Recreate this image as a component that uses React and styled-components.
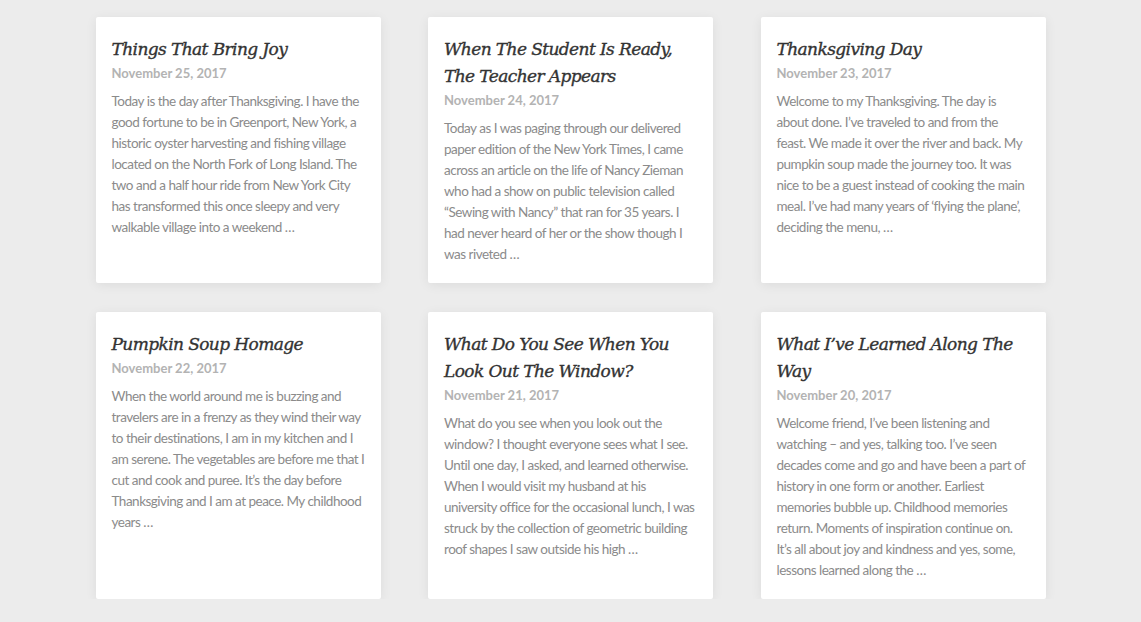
import React from "react";
import styled, { createGlobalStyle } from "styled-components";

const posts = [
  {
    title: "Things That Bring Joy",
    date: "November 25, 2017",
    excerpt:
      "Today is the day after Thanksgiving. I have the good fortune to be in Greenport, New York, a historic oyster harvesting and fishing village located on the North Fork of Long Island. The two and a half hour ride from New York City has transformed this once sleepy and very walkable village into a weekend …",
  },
  {
    title: "When The Student Is Ready, The Teacher Appears",
    date: "November 24, 2017",
    excerpt:
      "Today as I was paging through our delivered paper edition of the New York Times, I came across an article on the life of Nancy Zieman who had a show on public television called “Sewing with Nancy” that ran for 35 years. I had never heard of her or the show though I was riveted …",
  },
  {
    title: "Thanksgiving Day",
    date: "November 23, 2017",
    excerpt:
      "Welcome to my Thanksgiving. The day is about done. I’ve traveled to and from the feast. We made it over the river and back. My pumpkin soup made the journey too. It was nice to be a guest instead of cooking the main meal. I’ve had many years of ‘flying the plane’, deciding the menu, …",
  },
  {
    title: "Pumpkin Soup Homage",
    date: "November 22, 2017",
    excerpt:
      "When the world around me is buzzing and travelers are in a frenzy as they wind their way to their destinations, I am in my kitchen and I am serene. The vegetables are before me that I cut and cook and puree. It’s the day before Thanksgiving and I am at peace. My childhood years …",
  },
  {
    title: "What Do You See When You Look Out The Window?",
    date: "November 21, 2017",
    excerpt:
      "What do you see when you look out the window? I thought everyone sees what I see. Until one day, I asked, and learned otherwise. When I would visit my husband at his university office for the occasional lunch, I was struck by the collection of geometric building roof shapes I saw outside his high …",
  },
  {
    title: "What I’ve Learned Along The Way",
    date: "November 20, 2017",
    excerpt:
      "Welcome friend, I’ve been listening and watching – and yes, talking too. I’ve seen decades come and go and have been a part of history in one form or another. Earliest memories bubble up. Childhood memories return. Moments of inspiration continue on. It’s all about joy and kindness and yes, some, lessons learned along the …",
  },
];

const GlobalStyle = createGlobalStyle`
  html, body {
    margin: 0;
    padding: 0;
    background: #ececec;
  }
  body {
    font-family: Lato, "Open Sans", sans-serif;
  }
`;

const Page = styled.main`
  width: 950px;
  margin: 0 auto;
  padding-top: 17px;
  display: grid;
  grid-template-columns: repeat(3, 285px);
  column-gap: 47.5px;
  row-gap: 29px;
`;

const Card = styled.article`
  background: #fff;
  border-radius: 2px;
  box-shadow: 0 2px 12px rgba(0, 0, 0, 0.07);
  padding: 19px 16px 18px;
`;

const Title = styled.h2`
  margin: 0;
  font-family: "DejaVu Serif", serif;
  font-style: italic;
  font-weight: normal;
  font-size: 17px;
  line-height: 27px;
  letter-spacing: -0.6px;
  color: #333;
  -webkit-text-stroke: 0.35px #333;
`;

const Date = styled.div`
  font-family: Lato, sans-serif;
  font-weight: 700;
  font-size: 13px;
  line-height: 21px;
  color: #b3b3b3;
  margin-bottom: 7px;
`;

const Excerpt = styled.p`
  margin: 0;
  font-family: Lato, sans-serif;
  font-size: 13.5px;
  line-height: 21px;
  letter-spacing: -0.5px;
  color: #8b8b8b;
`;

export default function App() {
  return (
    <>
      <GlobalStyle />
      <Page>
        {posts.map((post) => (
          <Card key={post.title}>
            <Title>{post.title}</Title>
            <Date>{post.date}</Date>
            <Excerpt>{post.excerpt}</Excerpt>
          </Card>
        ))}
      </Page>
    </>
  );
}
